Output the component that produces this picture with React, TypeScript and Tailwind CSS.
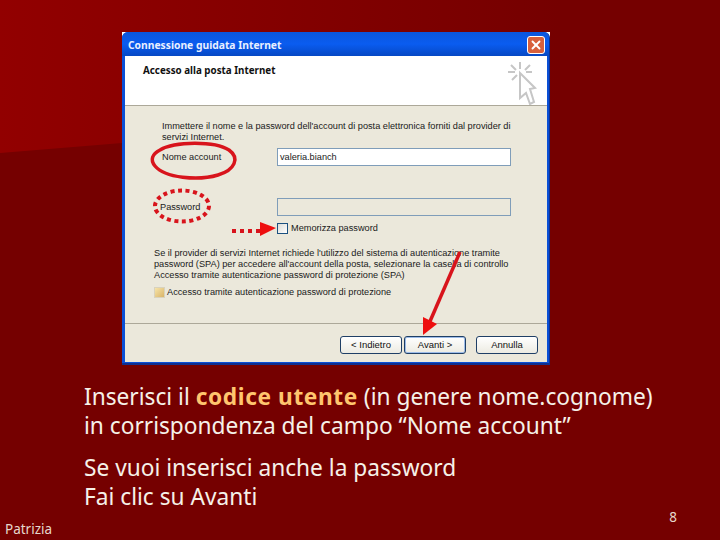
import React from "react"
import { X } from "lucide-react"

function WizardButton({ label, active }: { label: string; active?: boolean }) {
    return (
        <button
            className={`w-[62px] h-[18px] rounded-[3px] border border-[#1f3f66] bg-gradient-to-b from-white to-[#ecebe2] text-[9.5px] leading-[16px] text-[#111] ${
                active ? "shadow-[inset_0_0_0_1px_#9dbce8]" : ""
            }`}
        >
            {label}
        </button>
    )
}

function CursorIcon() {
    return (
        <svg width="34" height="44" viewBox="0 0 34 44" className="shrink-0">
            <g stroke="#c6c6c6" strokeWidth="2" fill="none">
                <path d="M13 1v7M4 4l5 5M23 4l-5 5M1 11h7M25 11h-6M5 19l5-5" />
                <path d="M13 12l15 15-5 1 4 13-4 2-4-11-6 5z" fill="#fff" />
            </g>
        </svg>
    )
}

export default function App() {
    return (
        <div className="relative w-[720px] h-[540px] overflow-hidden bg-[#750000] font-['Noto_Sans',sans-serif]">
            {/* lighter swoosh behind the slide */}
            <svg width="720" height="540" className="absolute inset-0">
                <defs>
                    <linearGradient id="swoosh" x1="0" y1="0" x2="1" y2="0">
                        <stop offset="0" stopColor="#920000" />
                        <stop offset="1" stopColor="#750000" />
                    </linearGradient>
                </defs>
                <path d="M0 0H560V107L0 153Z" fill="url(#swoosh)" />
            </svg>

            <div className="relative flex flex-col h-full pt-[32px]">
                {/* wizard window */}
                <div className="ml-[122px] w-[428px] h-[333px] shrink-0 bg-white">
                    <div className="flex flex-col h-full rounded-t-[6px] bg-[#0a4fd6] border-r border-b-[2px] border-[#10308f] pl-[3px] pr-[2px] pb-[1px] overflow-hidden">
                        <div className="flex items-center justify-between h-[24px] shrink-0 -ml-[3px] -mr-[2px] pl-[6px] pr-[4px] bg-gradient-to-b from-[#0b56dd] via-[#0a5cf0] to-[#0648c4]">
                            <span className="pt-[4px] text-[10.3px] font-bold text-[#e8f0ff] whitespace-nowrap">Connessione guidata Internet</span>
                            <span className="flex items-center justify-center w-[18px] h-[18px] mt-[2px] rounded-[3px] border border-white bg-[#d8603c]">
                                <X size={14} strokeWidth={3.2} color="white" />
                            </span>
                        </div>

                        <div className="flex justify-between h-[50px] shrink-0 bg-white border-b border-[#aca899] pl-[18px] pr-[6px] pt-[5px]">
                            <span className="pt-[3px] text-[9.8px] leading-[14px] font-bold text-[#111] whitespace-nowrap">Accesso alla posta Internet</span>
                            <CursorIcon />
                        </div>

                        <div className="flex flex-col flex-1 bg-[#ebe8db] font-['Liberation_Sans',sans-serif] text-[9.2px] leading-[11px] text-[#1a1a1a] whitespace-nowrap">
                            <div className="pl-[37px] pt-[15px]">
                                <p>Immettere il nome e la password dell'account di posta elettronica forniti dal provider di</p>
                                <p>servizi Internet.</p>
                            </div>

                            <div className="flex items-center h-[18px] mt-[5px] pl-[37px]">
                                <span className="w-[115px]">Nome account</span>
                                <span className="w-[234px] h-[18px] border border-[#7f9db9] bg-white pl-[2px] leading-[16px]">valeria.bianch</span>
                            </div>

                            <div className="flex items-center h-[18px] mt-[32px] pl-[35px]">
                                <span className="w-[117px]">Password</span>
                                <span className="w-[234px] h-[18px] border border-[#7f9db9] bg-[#ebe8db]" />
                            </div>

                            <div className="flex items-center gap-[3px] mt-[7px] pl-[152px]">
                                <span className="w-[11px] h-[11px] border border-[#1c5180] bg-gradient-to-br from-[#dcdcd7] to-white" />
                                <span>Memorizza password</span>
                            </div>

                            <div className="pl-[29px] mt-[14px]">
                                <p>Se il provider di servizi Internet richiede l'utilizzo del sistema di autenticazione tramite</p>
                                <p>password (SPA) per accedere all'account della posta, selezionare la casella di controllo</p>
                                <p>Accesso tramite autenticazione password di protezione (SPA)</p>
                            </div>

                            <div className="flex items-center gap-[2px] mt-[6px] pl-[29px]">
                                <span className="w-[11px] h-[11px] border border-[#d8d2bd] bg-gradient-to-br from-[#f7e4a8] to-[#d8b468]" />
                                <span>Accesso tramite autenticazione password di protezione</span>
                            </div>

                            <div className="flex items-start gap-[2px] mt-auto border-t border-[#aca899] h-[39px] pt-[12px] pl-[215px]">
                                <WizardButton label="< Indietro" />
                                <WizardButton label="Avanti >" active />
                                <span className="w-[6px]" />
                                <WizardButton label="Annulla" />
                            </div>
                        </div>
                    </div>
                </div>

                {/* slide text */}
                <div className="ml-[84px] mt-[17px] text-[22.7px] leading-[29px] text-[#f6f1e8]">
                    <p>
                        Inserisci il <b className="text-[#ffc56e] tracking-[0.6px]">codice utente</b> (in genere nome.cognome)
                    </p>
                    <p>in corrispondenza del campo “Nome account”</p>
                    <p className="mt-[13px]">Se vuoi inserisci anche la password</p>
                    <p>Fai clic su Avanti</p>
                </div>

                <div className="flex items-end justify-between -mt-[2px] pl-[5px] pr-[43px] pb-[3px] text-[13.5px] leading-[16px] text-[#e6d8cc]">
                    <span>Patrizia</span>
                    <span className="mb-[12px]">8</span>
                </div>
            </div>

            {/* hand drawn red marks over the screenshot */}
            <svg width="720" height="540" className="absolute inset-0 pointer-events-none">
                <path d="M160 150C175 141 215 141 229 150C240 158 235 170 218 175C198 181 165 178 155 166C150 160 152 154 160 150Z" fill="none" stroke="#d8141c" strokeWidth="3.5" />
                <ellipse cx="182" cy="206" rx="27" ry="15.5" fill="none" stroke="#d8141c" strokeWidth="4" strokeDasharray="4 3.5" />
                <path d="M232 231H260" stroke="#d8141c" strokeWidth="4" strokeDasharray="4 4" fill="none" />
                <path d="M276 228L260 222V236Z" fill="#ee0f0f" />
                <path d="M460 252L428 326" stroke="#d8141c" strokeWidth="3.5" fill="none" />
                <path d="M423 335L423 317L437 324Z" fill="#ee0f0f" />
            </svg>
        </div>
    )
}
